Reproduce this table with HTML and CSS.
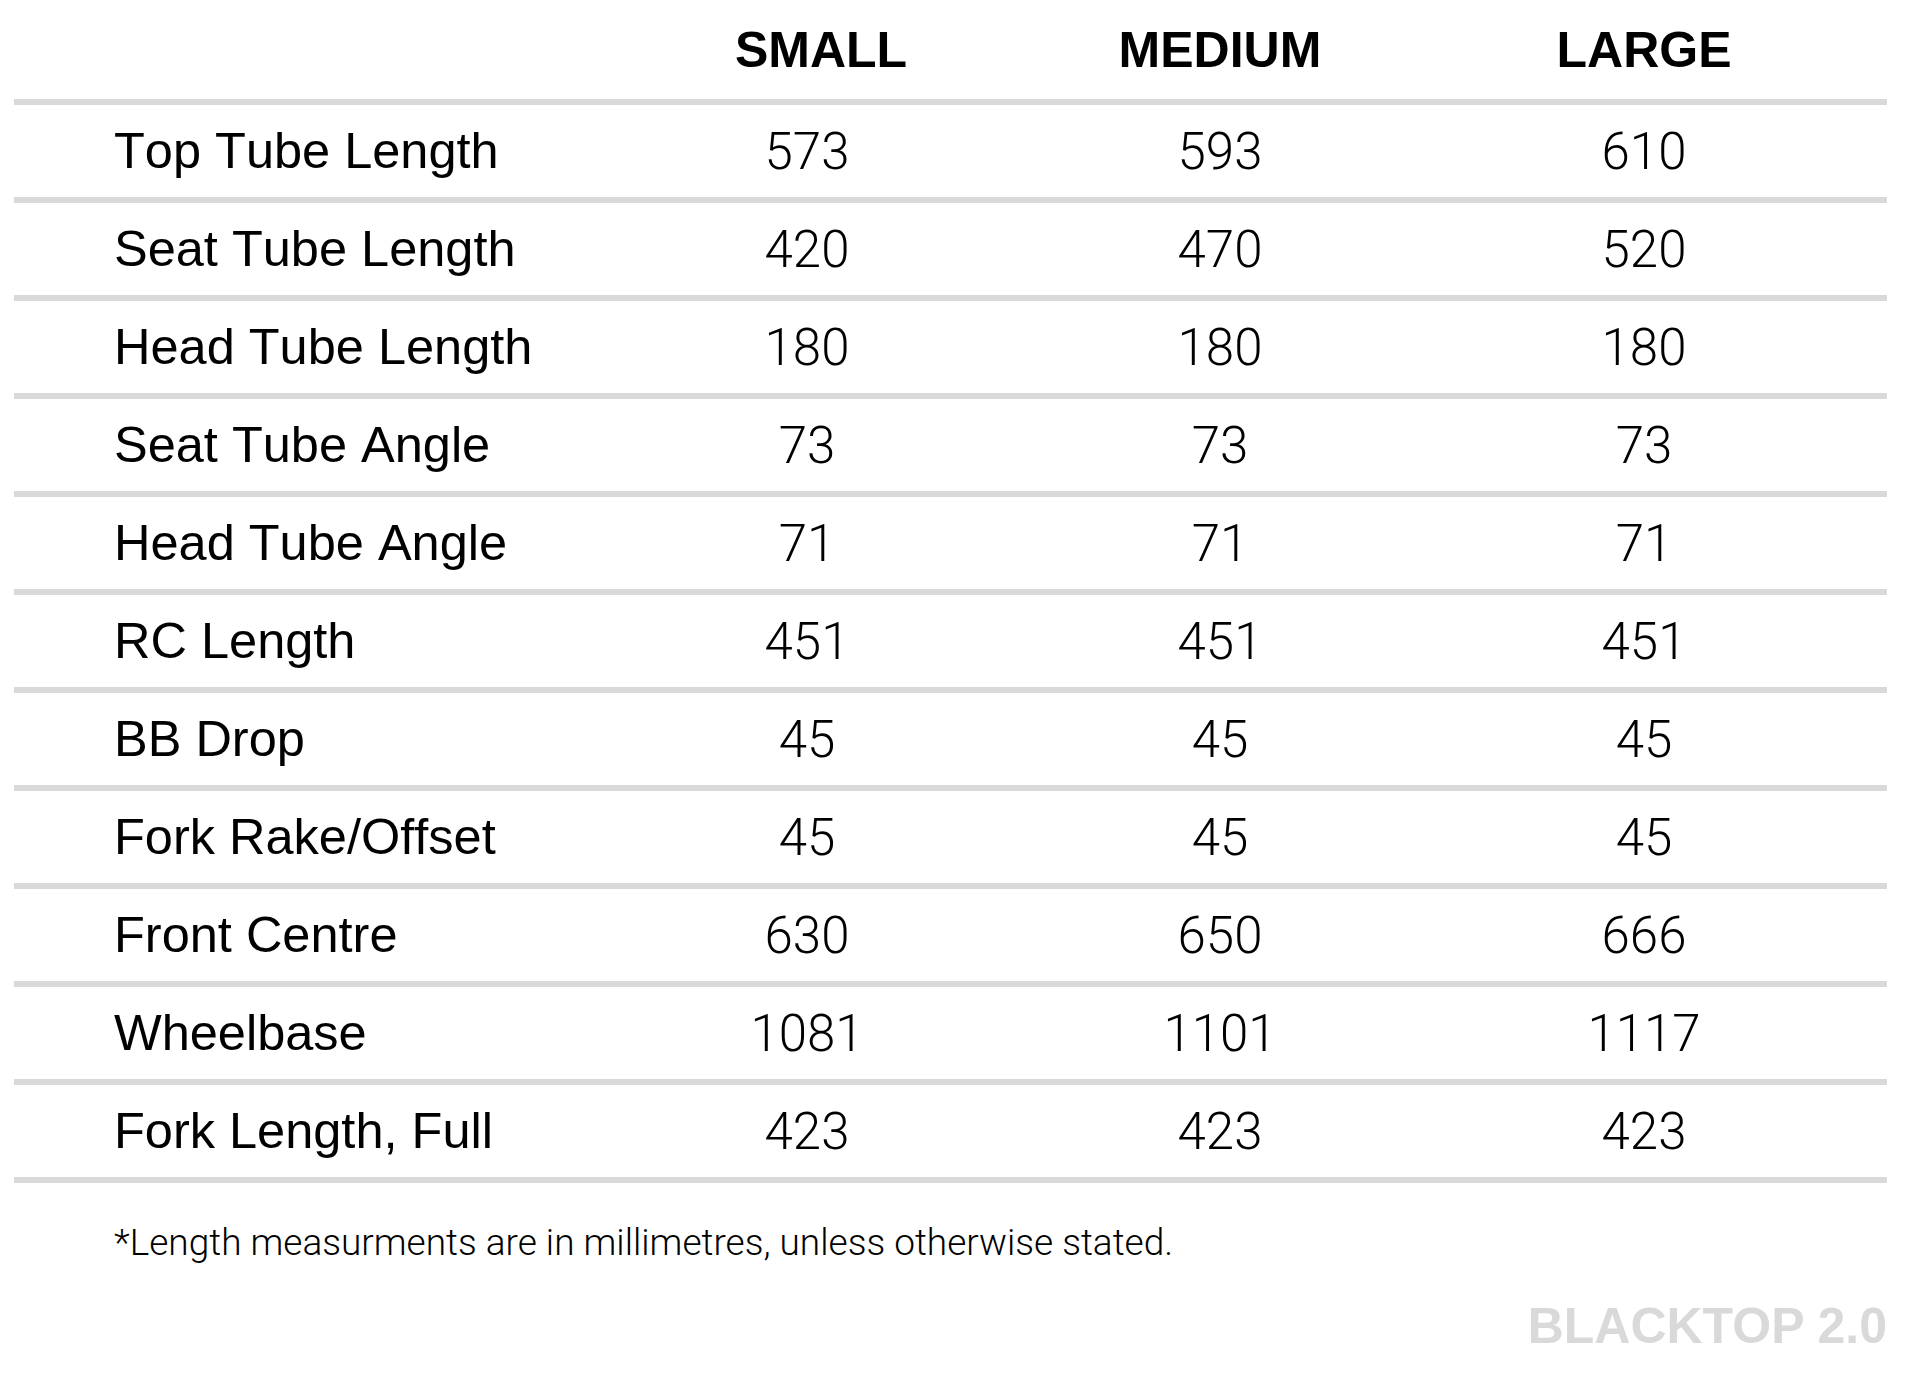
FILE: index.html
```html
<!DOCTYPE html>
<html lang="en">
<head>
<meta charset="utf-8">
<title>Blacktop 2.0 Geometry</title>
<link rel="stylesheet" href="styles.css">
</head>
<body>
<main class="sheet">
  <div class="geo">
    <div class="row head">
      <div class="label"></div>
      <div class="size size-small">SMALL</div>
      <div class="size">MEDIUM</div>
      <div class="size">LARGE</div>
    </div>
    <div class="row"><div class="label">Top Tube Length</div><div class="val">573</div><div class="val">593</div><div class="val">610</div></div>
    <div class="row"><div class="label">Seat Tube Length</div><div class="val">420</div><div class="val">470</div><div class="val">520</div></div>
    <div class="row"><div class="label">Head Tube Length</div><div class="val">180</div><div class="val">180</div><div class="val">180</div></div>
    <div class="row"><div class="label">Seat Tube Angle</div><div class="val">73</div><div class="val">73</div><div class="val">73</div></div>
    <div class="row"><div class="label">Head Tube Angle</div><div class="val">71</div><div class="val">71</div><div class="val">71</div></div>
    <div class="row"><div class="label">RC Length</div><div class="val">451</div><div class="val">451</div><div class="val">451</div></div>
    <div class="row"><div class="label">BB Drop</div><div class="val">45</div><div class="val">45</div><div class="val">45</div></div>
    <div class="row"><div class="label">Fork Rake/Offset</div><div class="val">45</div><div class="val">45</div><div class="val">45</div></div>
    <div class="row"><div class="label">Front Centre</div><div class="val">630</div><div class="val">650</div><div class="val">666</div></div>
    <div class="row"><div class="label">Wheelbase</div><div class="val">1081</div><div class="val">1101</div><div class="val">1117</div></div>
    <div class="row"><div class="label">Fork Length, Full</div><div class="val">423</div><div class="val">423</div><div class="val">423</div></div>
  </div>
  <p class="note">*Length measurments are in millimetres, unless otherwise stated.</p>
  <div class="brand">BLACKTOP 2.0</div>
</main>
</body>
</html>
```
FILE: styles.css
```css
html, body {
  margin: 0;
  padding: 0;
  background: #ffffff;
}

body {
  font-family: "Liberation Sans", Arial, sans-serif;
  color: #000;
}

.sheet {
  width: 1873px;
  margin-left: 14px;
}

.geo {
  display: flex;
  flex-direction: column;
}

.row {
  display: grid;
  grid-template-columns: 590px 406px 420px 428px 1fr;
  align-items: center;
  height: 92px;
  border-bottom: 6px solid #d9d9d9;
}

.head {
  height: 99px;
}

.label {
  padding-left: 100px;
  font-size: 50.5px;
  font-kerning: none;
  line-height: 1;
  white-space: nowrap;
}

.size {
  text-align: center;
  font-weight: 700;
  font-size: 50px;
  line-height: 1;
}

.size-small {
  padding-left: 28px;
}

.val {
  text-align: center;
  font-family: Roboto, "Liberation Sans", sans-serif;
  font-weight: 300;
  font-size: 51px;
  line-height: 1;
}

.note {
  margin: 41px 0 0 0;
  padding-left: 100px;
  font-family: Roboto, "Liberation Sans", sans-serif;
  font-weight: 300;
  font-size: 37px;
  line-height: 1;
}

.brand {
  margin-top: 40px;
  text-align: right;
  font-weight: 700;
  font-size: 50px;
  line-height: 1;
  color: #d9d9d9;
}
```
